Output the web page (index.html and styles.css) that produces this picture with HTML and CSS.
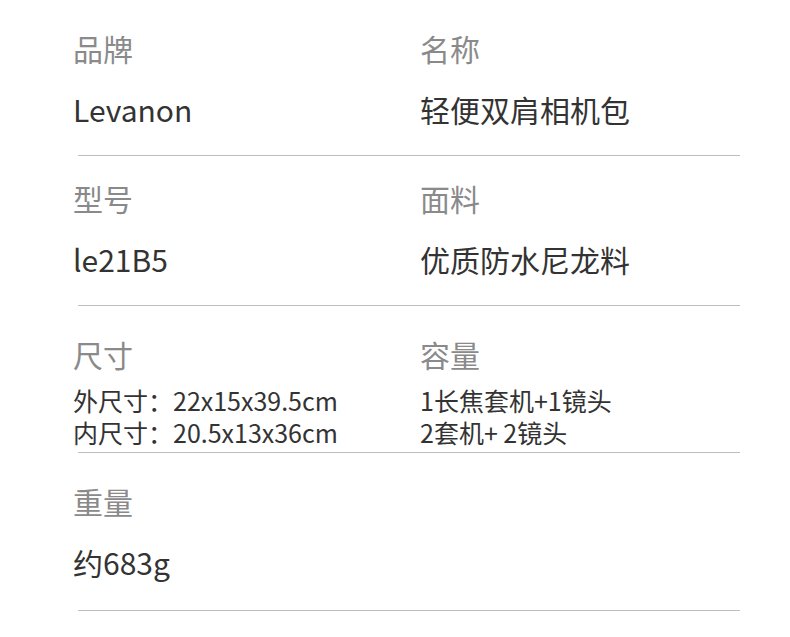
FILE: index.html
```html
<!DOCTYPE html>
<html lang="zh-CN">
<head>
<meta charset="utf-8">
<link rel="stylesheet" href="styles.css">
</head>
<body>
<div class="spec">
  <div class="row row-1">
    <div class="cell">
      <div class="label">品牌</div>
      <div class="value">Levanon</div>
    </div>
    <div class="cell">
      <div class="label">名称</div>
      <div class="value">轻便双肩相机包</div>
    </div>
  </div>
  <div class="divider"></div>
  <div class="row row-2">
    <div class="cell">
      <div class="label">型号</div>
      <div class="value">le21B5</div>
    </div>
    <div class="cell">
      <div class="label">面料</div>
      <div class="value">优质防水尼龙料</div>
    </div>
  </div>
  <div class="divider"></div>
  <div class="row row-3">
    <div class="cell">
      <div class="label">尺寸</div>
      <div class="value small">
        <div class="line">外尺寸：22x15x39.5cm</div>
        <div class="line">内尺寸：20.5x13x36cm</div>
      </div>
    </div>
    <div class="cell">
      <div class="label">容量</div>
      <div class="value small">
        <div class="line">1长焦套机+1镜头</div>
        <div class="line">2套机+ 2镜头</div>
      </div>
    </div>
  </div>
  <div class="divider"></div>
  <div class="row row-4">
    <div class="cell">
      <div class="label">重量</div>
      <div class="value">约683g</div>
    </div>
  </div>
  <div class="divider"></div>
</div>
</body>
</html>
```
FILE: styles.css
```css
html, body {
  margin: 0;
  padding: 0;
  background: #ffffff;
}
body {
  width: 790px;
  height: 637px;
  overflow: hidden;
  font-family: "Noto Sans CJK SC", "Noto Sans", sans-serif;
}
.spec {
  padding-left: 73px;
  padding-top: 28px;
}
.row {
  display: grid;
  grid-template-columns: 347px 1fr;
}
.label {
  font-size: 30px;
  line-height: 40px;
  color: #8a8a8a;
}
.value {
  font-size: 30px;
  line-height: 40px;
  color: #333333;
  margin-top: 21px;
}
.value.small {
  font-size: 25px;
  line-height: 32px;
  margin-top: 10px;
}
.line {
  height: 32px;
}
.row-1 { padding-bottom: 26px; }
.row-2 { padding-top: 22px; padding-bottom: 26px; }
.row-3 { padding-top: 28px; padding-bottom: 4px; }
.row-4 { padding-top: 28px; padding-bottom: 28px; }
.divider {
  margin-left: 5px;
  width: 662px;
  height: 1px;
  background: #bdbdbd;
}
```
